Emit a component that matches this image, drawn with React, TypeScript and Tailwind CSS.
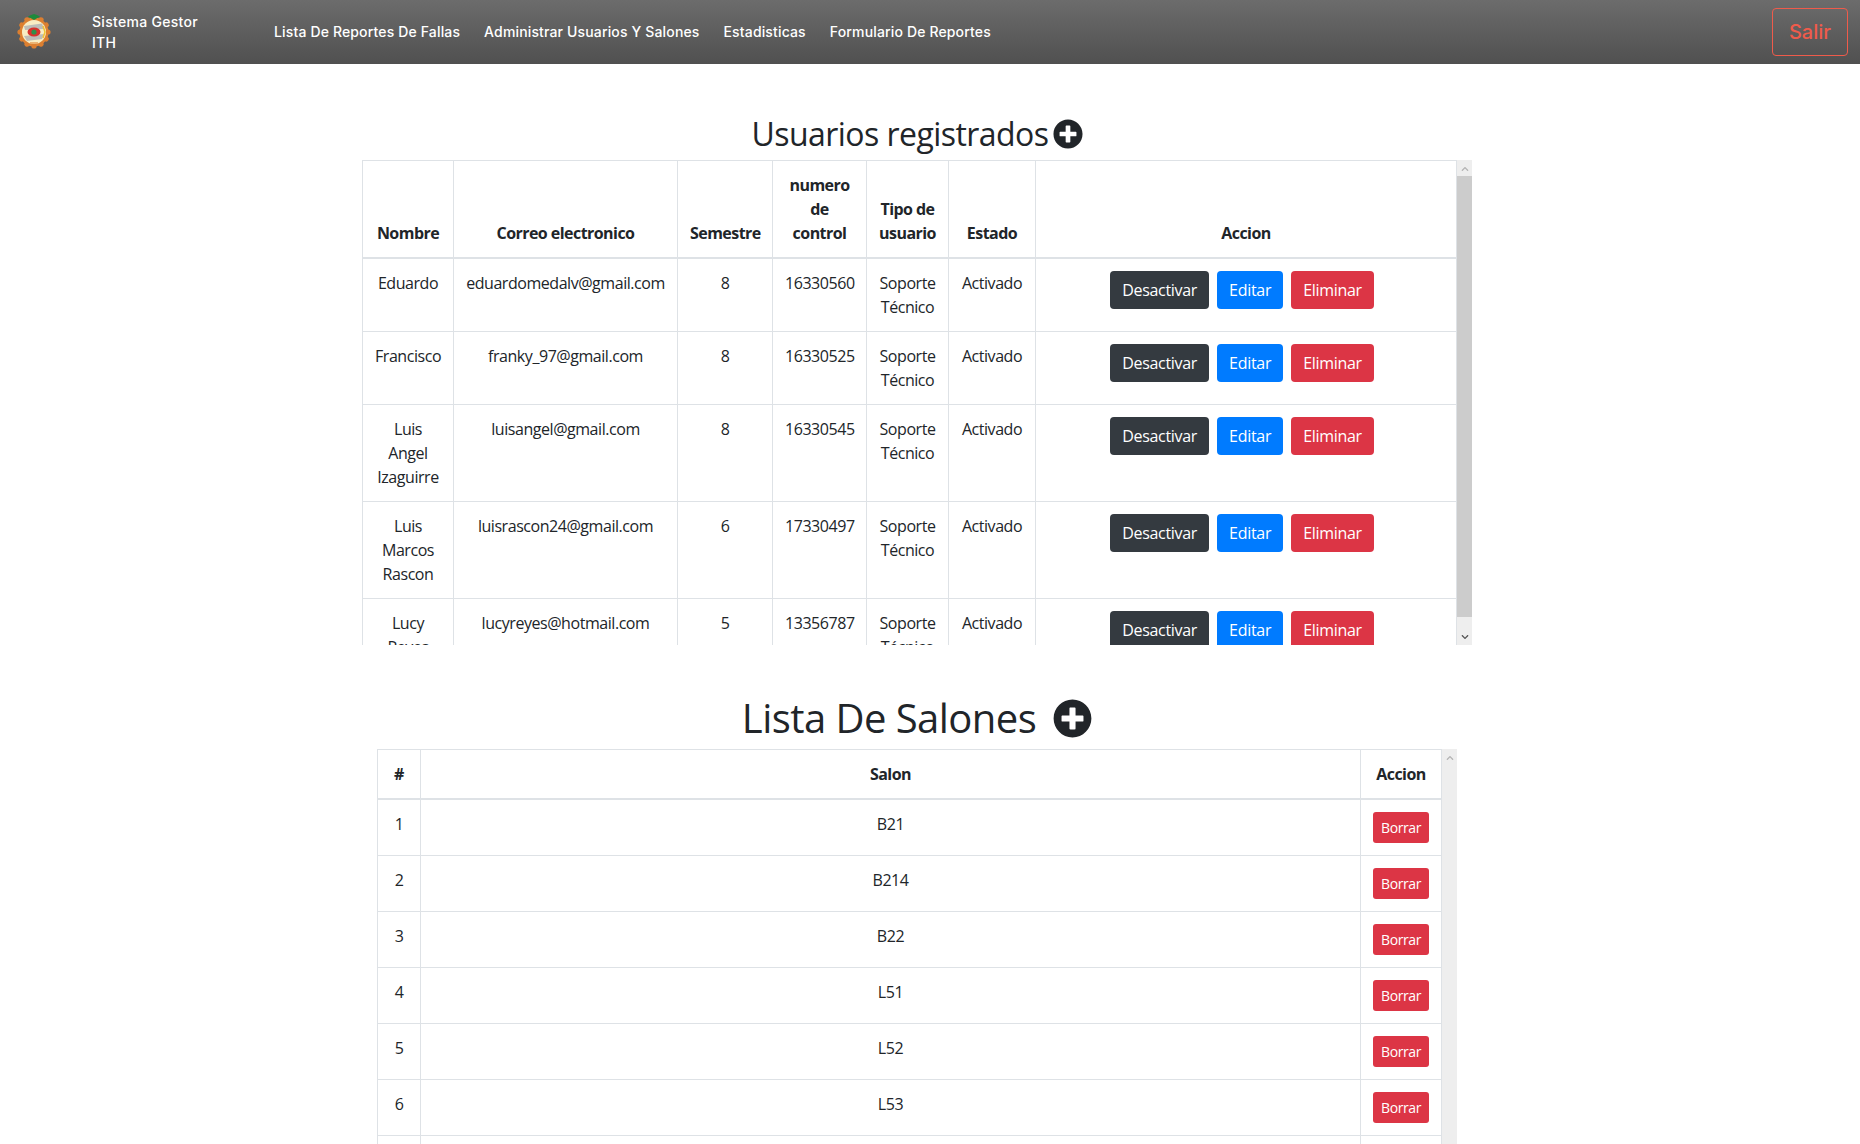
import { FaPlusCircle, FaChevronUp, FaChevronDown } from "react-icons/fa"

const usuarios = [
  { nombre: "Eduardo", correo: "eduardomedalv@gmail.com", semestre: "8", control: "16330560" },
  { nombre: "Francisco", correo: "franky_97@gmail.com", semestre: "8", control: "16330525" },
  { nombre: "Luis Angel Izaguirre", correo: "luisangel@gmail.com", semestre: "8", control: "16330545" },
  { nombre: "Luis Marcos Rascon", correo: "luisrascon24@gmail.com", semestre: "6", control: "17330497" },
  { nombre: "Lucy Reyes", correo: "lucyreyes@hotmail.com", semestre: "5", control: "13356787" },
]

const salones = ["B21", "B214", "B22", "L51", "L52", "L53", "L54"]

const th = "border border-[#dee2e6] border-b-2 p-3 align-bottom font-bold text-center whitespace-nowrap tracking-[-0.55px]"
const td = "border border-[#dee2e6] p-3 align-top text-center font-normal tracking-[-0.45px]"
const btn = "inline-block h-[38px] rounded px-3 text-white text-base leading-6 tracking-[-0.3px]"

function Logo() {
  return (
    <svg width="36" height="36" viewBox="0 0 36 36" className="shrink-0">
      <circle cx="18" cy="18" r="14.5" fill="#e08434" />
      {[0, 30, 60, 90, 120, 150, 180, 210, 240, 270, 300, 330].map((a) => (
        <circle key={a} cx="18" cy="4" r="2.6" fill="#dc7f30" transform={`rotate(${a} 18 18)`} />
      ))}
      <circle cx="18" cy="18" r="12" fill="#f8edc4" />
      <path d="M8 12 L26 9.5 L28 15 L9 16 Z" fill="#bdbdb8" />
      <path d="M8 22 L28 20 L26 25 L11 27 Z" fill="#bdbdb8" />
      <ellipse cx="18" cy="18" rx="6.5" ry="4.5" fill="#d8312c" />
      <circle cx="18" cy="18" r="2.6" fill="#2f8f4a" />
      <path d="M18 6 L12 2.5 L15 1 L18 0 L21 1 L24 2.5 Z" fill="#1d8a3c" />
      <path d="M27 12 L29 18 L27 24" stroke="#f2c230" strokeWidth="1.5" fill="none" />
      <path d="M14 29 L22 29" stroke="#e8a25a" strokeWidth="1.5" />
    </svg>
  )
}

function Scrollbar({ thumbTop, thumbHeight }: { thumbTop: string; thumbHeight: string }) {
  return (
    <div className="relative w-[15px] shrink-0 bg-[#eeeeee]">
      <FaChevronUp className="absolute left-[4px] top-[5px] text-[#b4b4b4]" size={8} />
      <div className={`absolute left-0 w-full bg-[#cccccc] ${thumbTop} ${thumbHeight}`} />
      <FaChevronDown className="absolute left-[4px] bottom-[4px] text-[#555555]" size={8} />
    </div>
  )
}

export default function App() {
  return (
    <div className="h-screen overflow-hidden bg-white text-[#212529] font-['Open_Sans',sans-serif] text-base leading-6">
      <nav className="flex h-16 items-center bg-gradient-to-b from-[#6c6c6c] to-[#505050] font-['Inter',sans-serif] text-sm font-medium text-white pl-4 pr-3">
        <Logo />
        <div className="ml-[40px] w-[182px] leading-[21px] tracking-[0.3px]">
          Sistema Gestor
          <br />
          ITH
        </div>
        <div className="flex gap-6 tracking-[0.15px]">
          <a>Lista De Reportes De Fallas</a>
          <a>Administrar Usuarios Y Salones</a>
          <a>Estadisticas</a>
          <a>Formulario De Reportes</a>
        </div>
        <button className="ml-auto h-12 w-[76px] rounded border border-[#ef5b4b] text-xl text-[#ef5b4b]">Salir</button>
      </nav>

      <main className="pr-[26px]">
        <h2 className="mt-[47px] flex h-[49px] items-center justify-center gap-[4px] pb-[4px] text-[32px] font-medium leading-[38px] tracking-[-0.55px]">
          Usuarios registrados
          <FaPlusCircle size={30} />
        </h2>
        <div className="mx-auto flex h-[485px] w-[1110px] overflow-hidden">
          <div className="flex-1 overflow-hidden">
            <table className="w-[1095px] table-fixed border-collapse">
              <colgroup>
                <col className="w-[91px]" />
                <col className="w-[224px]" />
                <col className="w-[95px]" />
                <col className="w-[94px]" />
                <col className="w-[82px]" />
                <col className="w-[87px]" />
                <col />
              </colgroup>
              <thead>
                <tr>
                  <th className={th}>Nombre</th>
                  <th className={th}>Correo electronico</th>
                  <th className={th}>Semestre</th>
                  <th className={th}>
                    numero
                    <br />
                    de
                    <br />
                    control
                  </th>
                  <th className={th}>
                    Tipo de
                    <br />
                    usuario
                  </th>
                  <th className={th}>Estado</th>
                  <th className={th}>Accion</th>
                </tr>
              </thead>
              <tbody>
                {usuarios.map((u) => (
                  <tr key={u.control}>
                    <td className={td}>{u.nombre}</td>
                    <td className={td}>{u.correo}</td>
                    <td className={td}>{u.semestre}</td>
                    <td className={td}>{u.control}</td>
                    <td className={td}>
                      Soporte
                      <br />
                      Técnico
                    </td>
                    <td className={td}>Activado</td>
                    <td className={td}>
                      <div className="mr-[8px] flex justify-center gap-2">
                        <button className={`${btn} bg-[#343a40]`}>Desactivar</button>
                        <button className={`${btn} bg-[#007bff]`}>Editar</button>
                        <button className={`${btn} bg-[#dc3545]`}>Eliminar</button>
                      </div>
                    </td>
                  </tr>
                ))}
              </tbody>
            </table>
          </div>
          <Scrollbar thumbTop="top-[16px]" thumbHeight="h-[441px]" />
        </div>

        <h2 className="mt-[49px] flex h-[48px] items-center justify-center gap-[17px] text-[40px] font-medium leading-[48px] tracking-[-0.55px]">
          Lista De Salones
          <FaPlusCircle size={39} />
        </h2>
        <div className="mx-auto mt-[7px] flex w-[1080px]">
          <div className="flex-1">
            <table className="w-full table-fixed border-collapse">
              <colgroup>
                <col className="w-[43px]" />
                <col />
                <col className="w-[81px]" />
              </colgroup>
              <thead>
                <tr>
                  <th className={th}>#</th>
                  <th className={th}>Salon</th>
                  <th className={th}>Accion</th>
                </tr>
              </thead>
              <tbody>
                {salones.map((s, i) => (
                  <tr key={s}>
                    <td className={td}>{i + 1}</td>
                    <td className={td}>{s}</td>
                    <td className={td}>
                      <button className="h-[31px] rounded-[3px] bg-[#dc3545] px-2 text-sm tracking-[-0.4px] text-white">
                        Borrar
                      </button>
                    </td>
                  </tr>
                ))}
              </tbody>
            </table>
          </div>
          <Scrollbar thumbTop="top-[16px]" thumbHeight="h-0" />
        </div>
      </main>
    </div>
  )
}
